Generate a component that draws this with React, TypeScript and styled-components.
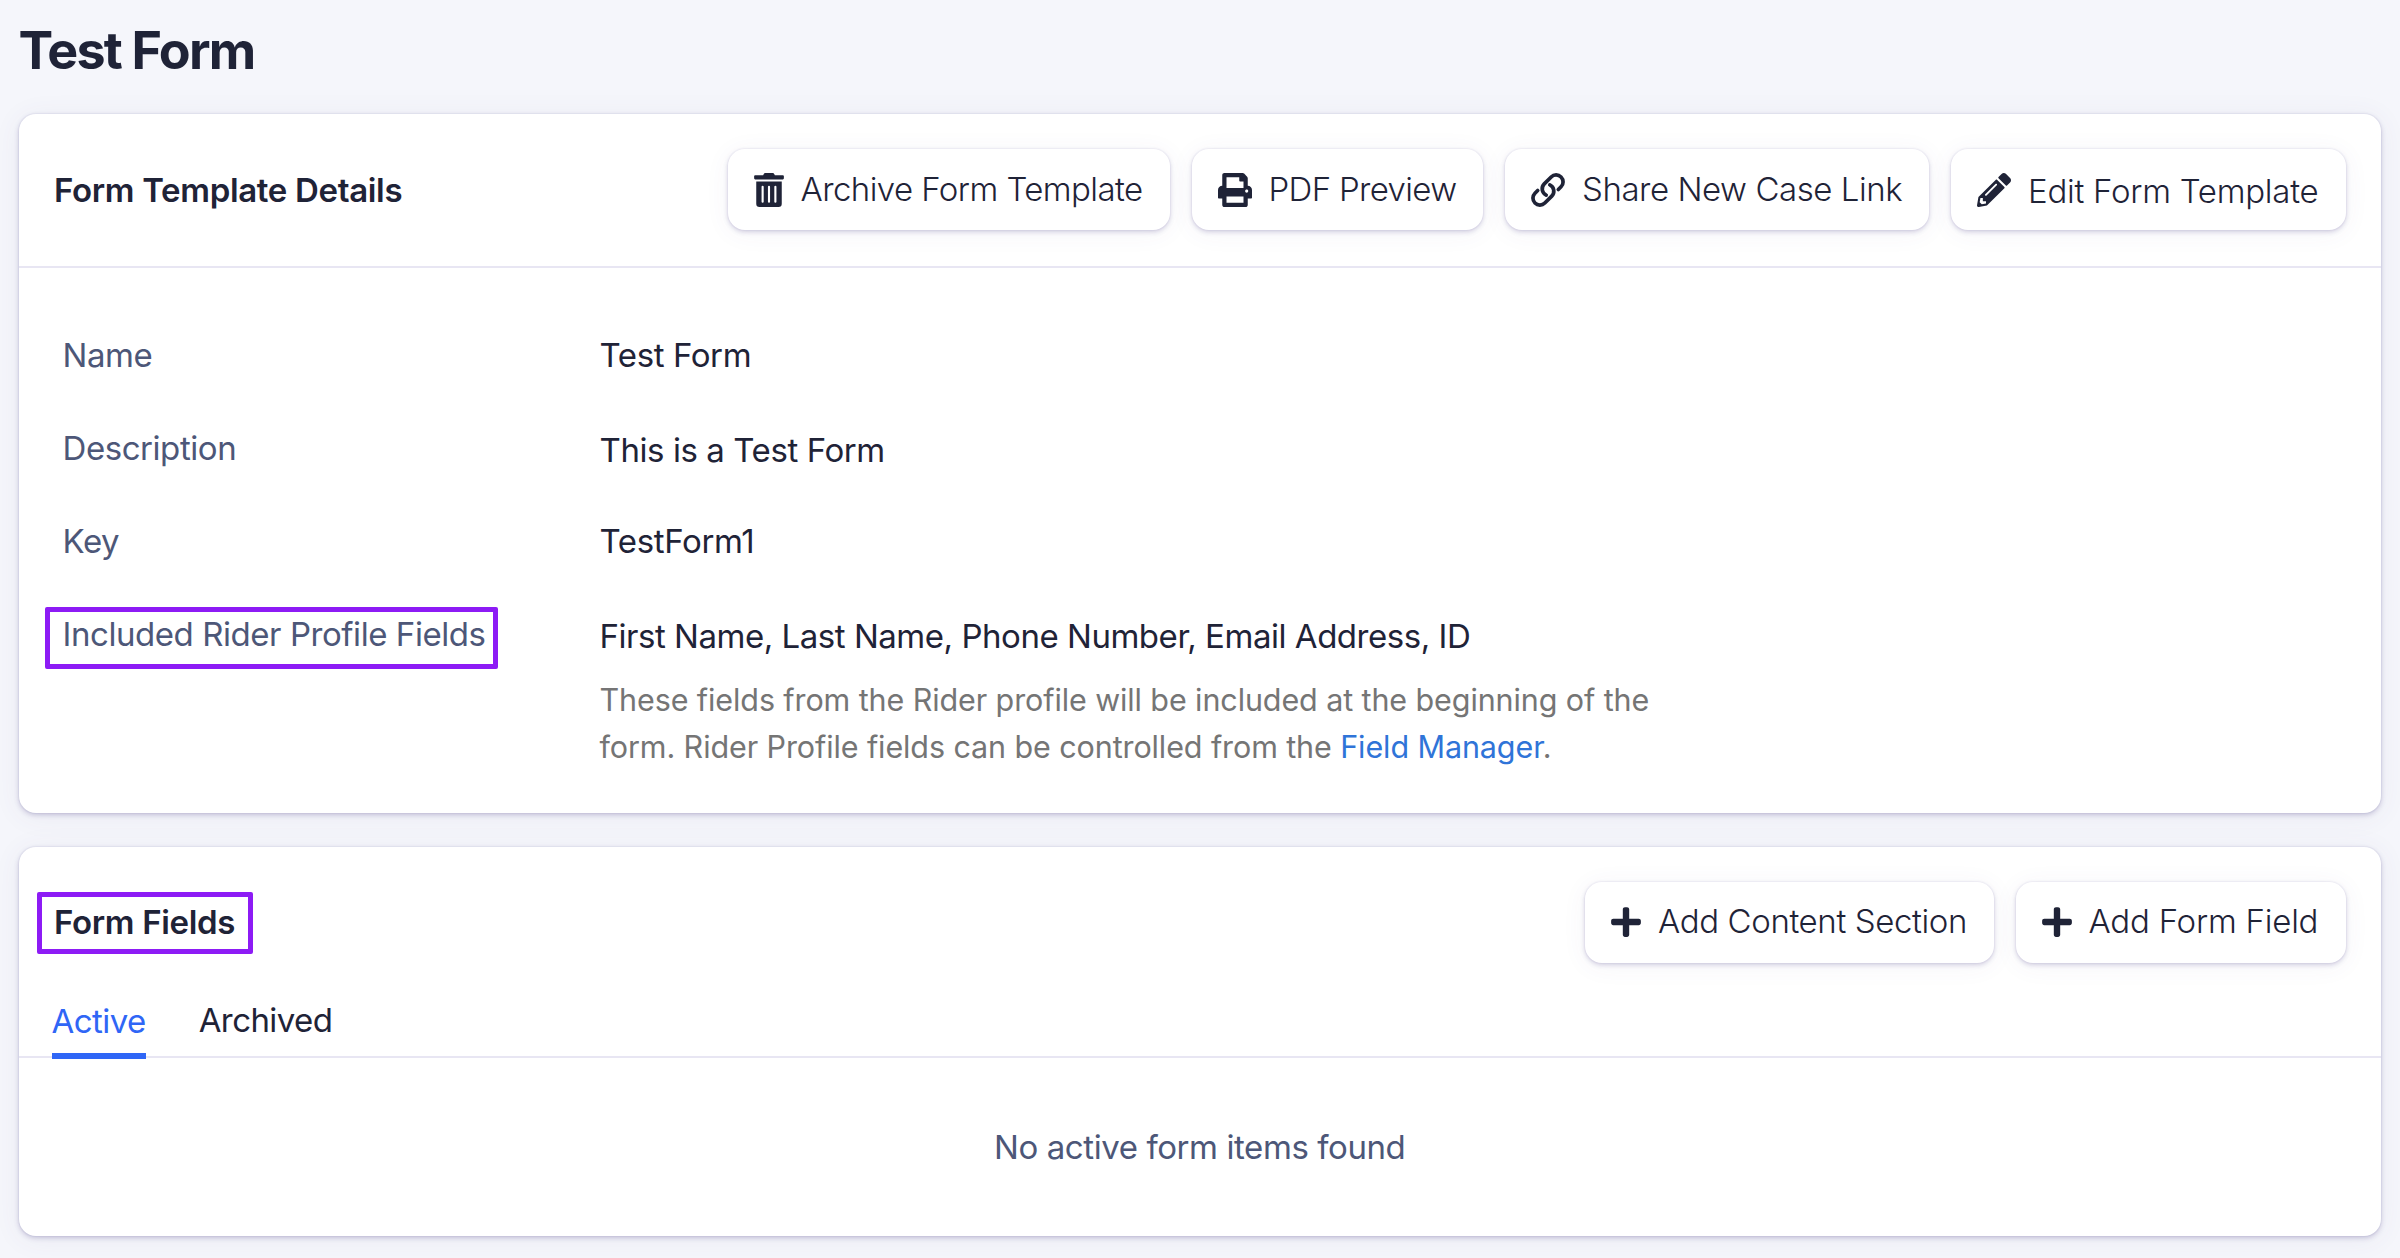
import React from "react";
import styled, { createGlobalStyle } from "styled-components";
import { FaTrashAlt, FaPrint, FaPencilAlt, FaPlus } from "react-icons/fa";

const GlobalStyle = createGlobalStyle`
  * { box-sizing: border-box; }
  body {
    margin: 0;
    background: #f5f6fb;
    color: #1f2337;
    font-family: Inter, "Liberation Sans", sans-serif;
    font-size: 33px;
    line-height: 40px;
    white-space: nowrap;
  }
`;

const Page = styled.main`
  min-height: 1258px;
  padding: 19px 19px 0 18.5px;
  overflow: hidden;
`;

const Title = styled.h1`
  margin: 0 0 31px;
  font-size: 52px;
  line-height: 64px;
  font-weight: 700;
  letter-spacing: -1.8px;
`;

const Card = styled.section`
  margin-bottom: 33.5px;
  background: #fff;
  border-radius: 17px;
  box-shadow: 0 0 1px 1px rgba(90, 80, 160, 0.06), 0 2px 5px rgba(70, 60, 130, 0.25),
    0 3px 28px rgba(90, 70, 130, 0.07);
`;

const CardHeader = styled.header<{ $divided?: boolean }>`
  display: flex;
  align-items: center;
  justify-content: space-between;
  padding: 35px 35px ${(p) => (p.$divided ? "36px" : "0")} 35.5px;
  border-bottom: ${(p) => (p.$divided ? "2px solid #e8e6f3" : "none")};
`;

const Heading = styled.h2`
  position: relative;
  margin: 0;
  font-size: 33px;
  font-weight: 600;
  letter-spacing: -0.33px;
`;

const Actions = styled.div`
  display: flex;
  gap: 22px;
`;

const Button = styled.button<{ $width: number; $iconWidth?: number }>`
  display: flex;
  align-items: center;
  gap: 17px;
  width: ${(p) => p.$width}px;
  height: 81px;
  padding: 0 0 0 26px;
  border: 0;
  border-radius: 17px;
  background: #fff;
  color: inherit;
  font: inherit;
  font-weight: 300;
  box-shadow: 0 0 1px 1px rgba(90, 80, 160, 0.05), 0 2px 5px rgba(70, 60, 130, 0.22),
    0 3px 26px rgba(90, 70, 130, 0.06);

  svg {
    flex: none;
    width: ${(p) => p.$iconWidth ?? 34}px;
    height: 34px;
  }
`;

const ButtonLabel = styled.span<{ $spacing: number; $low?: boolean }>`
  padding: ${(p) => (p.$low ? "2px 0 0" : "0 0 2px")};
  letter-spacing: ${(p) => p.$spacing}px;
`;

const Details = styled.dl`
  display: grid;
  grid-template-columns: 537px 1fr;
  row-gap: 53px;
  margin: 0;
  padding: 67px 43px 43.5px 44px;
`;

const Term = styled.dt`
  height: 40px;
  color: #4d5778;
  letter-spacing: -0.44px;
`;

const Value = styled.dd<{ $spacing: number; $drop?: number }>`
  height: 40px;
  margin: 0;
  padding-top: ${(p) => p.$drop ?? 0}px;
  letter-spacing: ${(p) => p.$spacing}px;
`;

const ProfileValue = styled(Value)`
  height: auto;
`;

const Marked = styled.span`
  position: relative;
`;

const Marker = styled.span<{ $inset: string }>`
  position: absolute;
  inset: ${(p) => p.$inset};
  border: 5px solid #8d1bf5;
  border-radius: 2px;
`;

const HelpText = styled.p`
  margin: 19.5px 0 0;
  color: #757575;
  font-size: 30.5px;
  line-height: 47px;
  letter-spacing: -0.1px;
`;

const Link = styled.a`
  color: #2f74d8;
  text-decoration: none;
`;

const Tabs = styled.nav`
  display: flex;
  height: 95.5px;
  padding: 38.5px 33px 0;
  gap: 53px;
  border-bottom: 2px solid #e8e6f3;
`;

const Tab = styled.a<{ $active?: boolean }>`
  height: 57.5px;
  margin-top: ${(p) => (p.$active ? 0 : -1)}px;
  color: ${(p) => (p.$active ? "#2f66f6" : "inherit")};
  border-bottom: ${(p) => (p.$active ? "6px solid #2f66f6" : "none")};
  letter-spacing: -0.57px;
`;

const Empty = styled.div`
  display: flex;
  align-items: center;
  justify-content: center;
  height: 178px;
  color: #4d5778;
  letter-spacing: -0.42px;
`;

const ChainIcon = () => (
  <svg viewBox="1 1 22 22" fill="none" stroke="currentColor" strokeWidth="2.4" strokeLinecap="round">
    <path d="M13.19 8.688a4.5 4.5 0 0 1 1.242 7.244l-4.5 4.5a4.5 4.5 0 0 1-6.364-6.364l1.757-1.757" />
    <path d="M18.675 11.689l1.757-1.757a4.5 4.5 0 0 0-6.364-6.364l-4.5 4.5a4.5 4.5 0 0 0 1.242 7.244" />
  </svg>
);

export default function App() {
  return (
    <Page>
      <GlobalStyle />
      <Title>Test Form</Title>

      <Card>
        <CardHeader $divided>
          <Heading>Form Template Details</Heading>
          <Actions>
            <Button $width={442} $iconWidth={30}>
              <FaTrashAlt />
              <ButtonLabel $spacing={-0.56}>Archive Form Template</ButtonLabel>
            </Button>
            <Button $width={291.5}>
              <FaPrint />
              <ButtonLabel $spacing={-0.66}>PDF Preview</ButtonLabel>
            </Button>
            <Button $width={424}>
              <ChainIcon />
              <ButtonLabel $spacing={-0.45}>Share New Case Link</ButtonLabel>
            </Button>
            <Button $width={395}>
              <FaPencilAlt />
              <ButtonLabel $low $spacing={-0.26}>Edit Form Template</ButtonLabel>
            </Button>
          </Actions>
        </CardHeader>
        <Details>
          <Term>Name</Term>
          <Value $spacing={-0.4}>Test Form</Value>
          <Term>Description</Term>
          <Value $spacing={-0.42} $drop={2}>This is a Test Form</Value>
          <Term>Key</Term>
          <Value $spacing={-0.36}>TestForm1</Value>
          <Term>
            <Marked>
              Included Rider Profile Fields
              <Marker $inset="-7px -12.5px -15px -18px" />
            </Marked>
          </Term>
          <ProfileValue $spacing={-0.47} $drop={2}>
            First Name, Last Name, Phone Number, Email Address, ID
            <HelpText>
              These fields from the Rider profile will be included at the beginning of the
              <br />
              form. Rider Profile fields can be controlled from the <Link>Field Manager</Link>.
            </HelpText>
          </ProfileValue>
        </Details>
      </Card>

      <Card>
        <CardHeader>
          <Heading>
            Form Fields
            <Marker $inset="-10px -17.5px -12px -17px" />
          </Heading>
          <Actions>
            <Button $width={408.5} $iconWidth={30}>
              <FaPlus />
              <ButtonLabel $spacing={-0.38}>Add Content Section</ButtonLabel>
            </Button>
            <Button $width={330.5} $iconWidth={30}>
              <FaPlus />
              <ButtonLabel $spacing={-0.22}>Add Form Field</ButtonLabel>
            </Button>
          </Actions>
        </CardHeader>
        <Tabs>
          <Tab $active>Active</Tab>
          <Tab>Archived</Tab>
        </Tabs>
        <Empty>No active form items found</Empty>
      </Card>
    </Page>
  );
}
